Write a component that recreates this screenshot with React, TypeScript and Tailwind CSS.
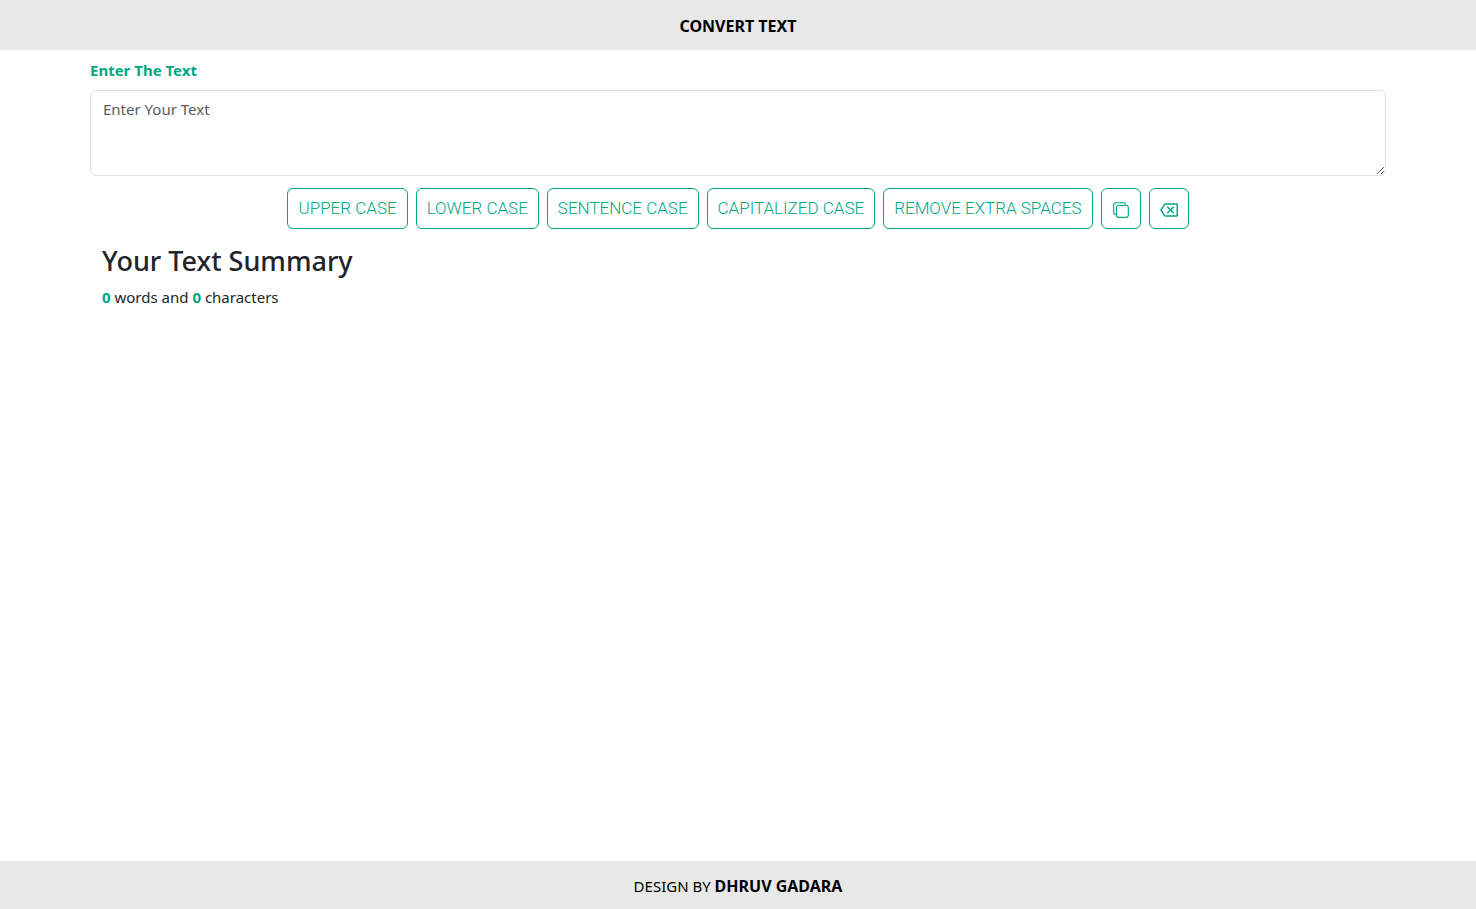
import { useState } from "react";
import { IoCopyOutline } from "react-icons/io5";
import { MdOutlineBackspace } from "react-icons/md";

const buttonClass =
  "rounded-md border border-[#00a881] px-2.5 py-2 font-['Roboto',sans-serif] text-[17px] font-light leading-[23px] text-[#00a881] hover:bg-[#00a881] hover:text-white";

export default function App() {
  const [text, setText] = useState("");
  const words = text.split(/\s+/).filter(Boolean).length;

  const actions = [
    { label: "UPPER CASE", run: () => setText(text.toUpperCase()) },
    { label: "LOWER CASE", run: () => setText(text.toLowerCase()) },
    {
      label: "SENTENCE CASE",
      run: () =>
        setText(text.toLowerCase().replace(/(^\s*|[.!?]\s+)([a-z])/g, (m) => m.toUpperCase())),
    },
    {
      label: "CAPITALIZED CASE",
      run: () => setText(text.toLowerCase().replace(/\b[a-z]/g, (m) => m.toUpperCase())),
    },
    { label: "REMOVE EXTRA SPACES", run: () => setText(text.replace(/\s+/g, " ").trim()) },
  ];

  return (
    <div className="flex min-h-screen flex-col bg-white font-['Noto_Sans',sans-serif] text-[15px] leading-6 text-[#212529]">
      <header className="bg-[#e8e8e8] pt-3.5 pb-3 text-center text-base font-bold text-black">
        CONVERT TEXT
      </header>
      <main className="mx-auto w-full max-w-[1320px] grow px-3 pt-2">
        <label htmlFor="source" className="mb-2 block font-bold text-[#00a881]">
          Enter The Text
        </label>
        <textarea
          id="source"
          rows={3}
          value={text}
          onChange={(e) => setText(e.target.value)}
          placeholder="Enter Your Text"
          className="block h-[86px] w-full resize-y rounded-md border border-[#dee2e6] px-3 py-1.5 placeholder:text-[#595c5f]"
        />
        <div className="mt-3 flex flex-wrap justify-center gap-2">
          {actions.map((a) => (
            <button key={a.label} type="button" onClick={a.run} className={buttonClass}>
              {a.label}
            </button>
          ))}
          <button
            type="button"
            aria-label="Copy text"
            onClick={() => navigator.clipboard.writeText(text)}
            className={buttonClass}
          >
            <IoCopyOutline className="mt-0.5 size-[18px]" />
          </button>
          <button
            type="button"
            aria-label="Clear text"
            onClick={() => setText("")}
            className={buttonClass}
          >
            <MdOutlineBackspace className="mt-0.5 size-[18px]" />
          </button>
        </div>
        <section className="px-3 pt-4">
          <h3 className="mb-2 text-[27px] font-medium leading-8">Your Text Summary</h3>
          <p>
            <b className="text-[#00a881]">{words}</b> words and{" "}
            <b className="text-[#00a881]">{text.length}</b> characters
          </p>
        </section>
      </main>
      <footer className="bg-[#e8e8e8] pt-[13px] pb-[11px] text-center text-black">
        DESIGN BY <b className="text-base">DHRUV GADARA</b>
      </footer>
    </div>
  );
}
